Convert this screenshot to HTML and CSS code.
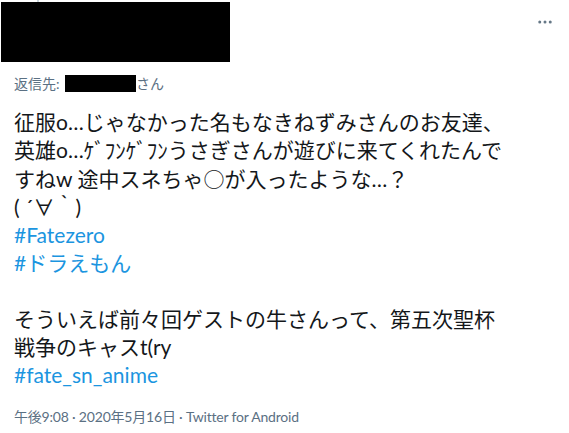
FILE: index.html
```html
<!DOCTYPE html>
<html lang="ja">
<head>
  <meta charset="UTF-8">
  <title>Tweet</title>
  <link rel="stylesheet" href="styles.css">
</head>
<body>
  <div class="tweet">
    <div class="thread-line"></div>
    <div class="header">
      <div class="redact-name"></div>
      <div class="more">
        <svg width="18" height="18" viewBox="0 0 24 24"><circle cx="5" cy="12" r="2"/><circle cx="12" cy="12" r="2"/><circle cx="19" cy="12" r="2"/></svg>
      </div>
    </div>
    <div class="reply">返信先: <span class="redact-user"></span>さん</div>
    <div class="text">
      <p class="para">征服o…じゃなかった名もなきねずみさんのお友達、<br>英雄o…ｹﾞﾌﾝｹﾞﾌﾝうさぎさんが遊びに来てくれたんで<br>すねw 途中スネちゃ<span class="cjk">○</span>が入ったような…？<br>( ´∀｀)<br><a class="tag">#Fatezero</a><br><a class="tag">#ドラえもん</a></p>
      <p class="para">そういえば前々回ゲストの牛さんって、第五次聖杯<br>戦争のキャスt(ry<br><a class="tag">#fate_sn_anime</a></p>
    </div>
    <div class="meta">午後9:08 · 2020年5月16日 · Twitter for Android</div>
  </div>
</body>
</html>
```

FILE: styles.css
```css
body {
  margin: 0;
  background-color: #fff;
  font-family: "Lato", "Noto Sans CJK JP", sans-serif;
  color: #14171a;
}
.tweet {
  position: relative;
  padding: 2px 14px 0 1px;
}
.thread-line {
  position: absolute;
  left: 37px;
  top: 0;
  width: 2px;
  height: 2px;
  background-color: #ccd6dd;
}
.header {
  display: flex;
  justify-content: space-between;
  align-items: flex-start;
}
.redact-name {
  width: 229px;
  height: 60px;
  background-color: #000;
}
.more {
  margin-top: 11px;
  margin-right: 1px;
  fill: #657786;
}
.reply {
  margin-top: 12px;
  padding-left: 13px;
  font-size: 14px;
  line-height: 20px;
  color: #5b7083;
}
.redact-user {
  display: inline-block;
  width: 71px;
  height: 17px;
  margin-left: 2px;
  vertical-align: -3px;
  background-color: #000;
}
.text {
  margin-top: 14px;
  padding-left: 13px;
  font-size: 21px;
  line-height: 28px;
}
.cjk {
  font-family: "Noto Sans CJK JP", sans-serif;
}
.para {
  margin: 0 0 28px;
}
.para:last-child {
  margin-bottom: 0;
}
.tag {
  color: #1b95e0;
}
.meta {
  margin-top: 18px;
  padding-left: 13px;
  font-size: 14px;
  line-height: 20px;
  letter-spacing: -0.2px;
  color: #5b7083;
}
```
